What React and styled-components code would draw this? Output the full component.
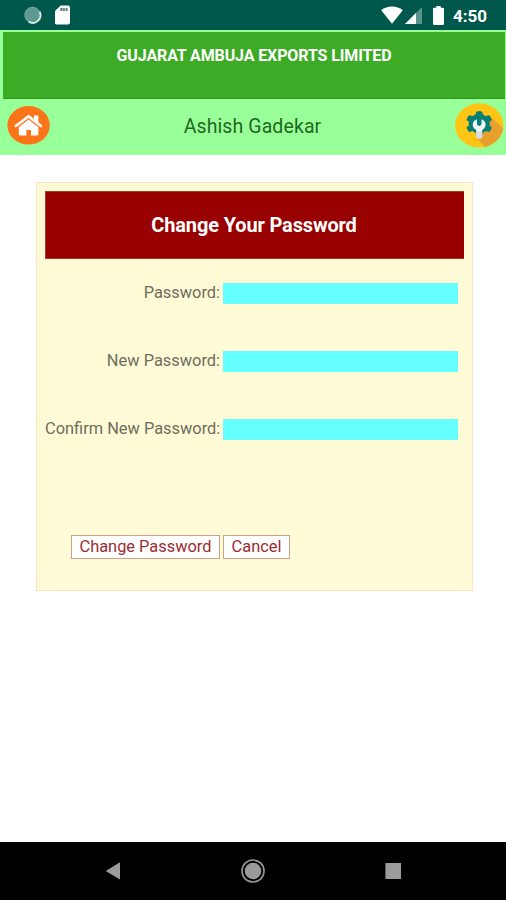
import React from "react";
import styled, { createGlobalStyle } from "styled-components";

const GlobalStyle = createGlobalStyle`
  * {
    box-sizing: border-box;
  }
  body {
    margin: 0;
    background: #fff;
    font-family: Roboto, "Liberation Sans", sans-serif;
  }
`;

const LoaderIcon = () => (
  <svg width="18" height="18" viewBox="0 0 18 18">
    <circle cx="8.5" cy="9" r="8.2" fill="#5f9a91" />
    <path
      d="M15.5 5.5A7.7 7.7 0 0 1 4.5 15.6"
      fill="none"
      stroke="#dcebe8"
      strokeWidth="1.8"
    />
    <path
      d="M4.5 15.6A7.7 7.7 0 1 1 15.5 5.5"
      fill="none"
      stroke="#7fb0a8"
      strokeWidth="1"
      strokeDasharray="1.5 1.2"
    />
  </svg>
);

const SdCardIcon = () => (
  <svg width="16" height="20" viewBox="0 0 16 20">
    <path
      d="M5.6 0.5H13a2 2 0 0 1 2 2V17.5a2 2 0 0 1-2 2H1.8a2 2 0 0 1-2-2V6.2z"
      fill="#fff"
    />
    <path d="M5.4 3h2.2v3H5.4zM8.2 3h1.6v3H8.2zM10.6 3h2v3h-2z" fill="#4b8078" />
  </svg>
);

const WifiIcon = () => (
  <svg width="22" height="18" viewBox="0 0 22 18">
    <path d="M0.2 4.2C6.4-0.8 15.6-0.8 21.8 4.2L11 17.8z" fill="#fff" />
  </svg>
);

const SignalIcon = () => (
  <svg width="17" height="17" viewBox="0 0 17 17">
    <path d="M17 0V17H0z" fill="#5b938b" />
    <path d="M11 6V17H0z" fill="#fff" />
  </svg>
);

const BatteryIcon = () => (
  <svg width="11" height="19" viewBox="0 0 11 19">
    <path
      d="M3.3 0h4.4v1.8h2A1.3 1.3 0 0 1 11 3.1v14.4A1.3 1.3 0 0 1 9.7 19H1.3A1.3 1.3 0 0 1 0 17.5V3.1a1.3 1.3 0 0 1 1.3-1.3h2z"
      fill="#fff"
    />
  </svg>
);

const HomeIcon = () => (
  <svg width="43" height="39" viewBox="0 0 43 39">
    <ellipse cx="21.6" cy="19.3" rx="21.2" ry="19.3" fill="#fb7418" />
    <path
      d="M8.8 20L21.6 10.2L34 20"
      fill="none"
      stroke="#fff"
      strokeWidth="2.6"
      strokeLinejoin="round"
      strokeLinecap="round"
    />
    <path d="M27 9.4h4.4v8.4l-4.4-3.4z" fill="#fff" />
    <path
      d="M11.8 21.2L21.6 13.6L31.4 21.2V28a1.4 1.4 0 0 1-1.4 1.4H24V24h-4.6V29.4H13.2A1.4 1.4 0 0 1 11.8 28z"
      fill="#fff"
    />
    <path d="M11 20.6L21.6 12.5L32 20.6" fill="none" stroke="#fb9a58" strokeWidth="0.8" />
  </svg>
);

const GearIcon = () => (
  <svg width="49" height="45" viewBox="0 0 49 45">
    <clipPath id="disc">
      <ellipse cx="24.3" cy="22.4" rx="24.2" ry="22.2" />
    </clipPath>
    <g clipPath="url(#disc)">
      <rect width="49" height="45" fill="#ffc515" />
      <path d="M37.5 15.5L50 27V46H32L21 35V27z" fill="#e8a02c" />
    </g>
    <g transform="translate(24.2 20.6) scale(1.08 1)">
      <circle r="9.8" fill="#087f75" />
      {[0, 60, 120, 180, 240, 300].map((angle) => (
        <rect
          key={angle}
          x="-3.1"
          y="-12.4"
          width="6.2"
          height="6"
          rx="1.8"
          fill="#087f75"
          transform={`rotate(${angle})`}
        />
      ))}
    </g>
    <path
      d="M21.9 16.2V20.6A2.3 2.3 0 0 0 26.5 20.6V16.2C32 18 31.8 24.8 27.2 26.8V33.2A3 2.4 0 0 1 21.2 33.2V26.8C16.6 24.8 16.4 18 21.9 16.2z"
      fill="#f4f5f8"
    />
    <path d="M21.2 28.6h6v4.6a3 2.4 0 0 1-6 0z" fill="#d9dce0" />
  </svg>
);

const BackIcon = () => (
  <svg width="15" height="18" viewBox="0 0 15 18">
    <path d="M15 0.3V17.6L0.7 9z" fill="#9b9b9b" />
  </svg>
);

const HomeButtonIcon = () => (
  <svg width="24" height="24" viewBox="0 0 24 24">
    <circle cx="12" cy="12" r="11" fill="none" stroke="#929292" strokeWidth="1.7" />
    <circle cx="12" cy="12" r="8.3" fill="#9b9b9b" />
  </svg>
);

const RecentsIcon = () => (
  <svg width="16" height="16" viewBox="0 0 16 16">
    <rect x="0.4" width="15.6" height="16" fill="#9b9b9b" />
  </svg>
);

const fields = ["Password:", "New Password:", "Confirm New Password:"];

const App = () => {
  return (
    <Screen>
      <GlobalStyle />
      <StatusBar>
        <LoaderIcon />
        <SdCardIcon />
        <StatusRight>
          <WifiIcon />
          <SignalIcon />
          <BatteryIcon />
          <Clock>4:50</Clock>
        </StatusRight>
      </StatusBar>
      <Header>
        <Company>GUJARAT AMBUJA EXPORTS LIMITED</Company>
        <UserRow>
          <HomeIcon />
          <UserName>Ashish Gadekar</UserName>
          <GearIcon />
        </UserRow>
      </Header>
      <Panel>
        <PanelTitle>Change Your Password</PanelTitle>
        <Form>
          {fields.map((label) => (
            <Field key={label}>
              <Label>{label}</Label>
              <Input type="password" aria-label={label} />
            </Field>
          ))}
        </Form>
        <Actions>
          <Button $width="149px">Change Password</Button>
          <Button $width="67px">Cancel</Button>
        </Actions>
      </Panel>
      <NavBar>
        <BackIcon />
        <HomeButtonIcon />
        <RecentsIcon />
      </NavBar>
    </Screen>
  );
};

export default App;

const Screen = styled.div`
  display: flex;
  flex-direction: column;
  width: 506px;
  height: 900px;
  background: #fff;
  overflow: hidden;
`;

const StatusBar = styled.div`
  display: flex;
  align-items: center;
  flex: none;
  gap: 13px;
  height: 30px;
  padding: 0 19px 0 24px;
  background: #00574b;
`;

const StatusRight = styled.div`
  display: flex;
  align-items: center;
  margin-left: auto;

  svg:nth-child(2) {
    margin-left: 2px;
  }
  svg:nth-child(3) {
    margin-left: 11px;
  }
`;

const Clock = styled.div`
  width: 34px;
  margin-left: 9px;
  padding-top: 2px;
  color: #fff;
  font-size: 17px;
  font-weight: 700;
  line-height: 30px;
  white-space: nowrap;
`;

const Header = styled.div`
  flex: none;
  height: 125px;
  padding: 2px 1px 0 3px;
  background: #99ff99;
`;

const Company = styled.div`
  height: 67px;
  padding-top: 14px;
  border-bottom: 1px solid #2d981b;
  background: #3dab25;
  color: #fff;
  font-size: 16px;
  font-weight: 700;
  letter-spacing: -0.12px;
  line-height: 20px;
  text-align: center;
`;

const UserRow = styled.div`
  display: flex;
  align-items: center;
  justify-content: space-between;
  height: 52px;
  padding: 0 1px 0 4px;
`;

const UserName = styled.div`
  padding-top: 4px;
  color: #1d6a1d;
  font-size: 19.5px;
  letter-spacing: 0.1px;
  line-height: 24px;
`;

const Panel = styled.div`
  display: flex;
  flex-direction: column;
  flex: none;
  width: 437px;
  height: 409px;
  margin: 27px 0 0 36px;
  padding: 8px;
  border: 1px solid #ffe2c0;
  background: #fffbd6;
`;

const PanelTitle = styled.div`
  height: 68px;
  padding-right: 2px;
  border: 1px solid #a83a2c;
  border-width: 1px 0 1px 1px;
  background: #990000;
  color: #fff;
  font-size: 20px;
  font-weight: 700;
  letter-spacing: -0.15px;
  line-height: 66px;
  text-align: center;
`;

const Form = styled.div`
  display: flex;
  flex-direction: column;
  gap: 47px;
  padding-top: 24px;
`;

const Field = styled.div`
  display: grid;
  grid-template-columns: 175px 235px;
  gap: 3px;
  height: 21px;
`;

const Label = styled.label`
  color: #6f6d60;
  font-size: 16.4px;
  line-height: 20px;
  text-align: right;
  white-space: nowrap;
`;

const Input = styled.input`
  height: 21px;
  border: 0;
  background: #66ffff;
  outline: none;
`;

const Actions = styled.div`
  display: flex;
  gap: 3px;
  padding: 95px 0 0 26px;
`;

const Button = styled.button`
  width: ${({ $width }) => $width};
  height: 24px;
  padding: 0 0 1px;
  border: 1px solid #d2a08a;
  background: #fff;
  color: #9c2c33;
  font-family: inherit;
  font-size: 16.4px;
  line-height: 21px;
  white-space: nowrap;
`;

const NavBar = styled.div`
  display: flex;
  align-items: center;
  justify-content: space-between;
  flex: none;
  height: 58px;
  margin-top: auto;
  padding: 0 105px;
  background: #000;
`;
